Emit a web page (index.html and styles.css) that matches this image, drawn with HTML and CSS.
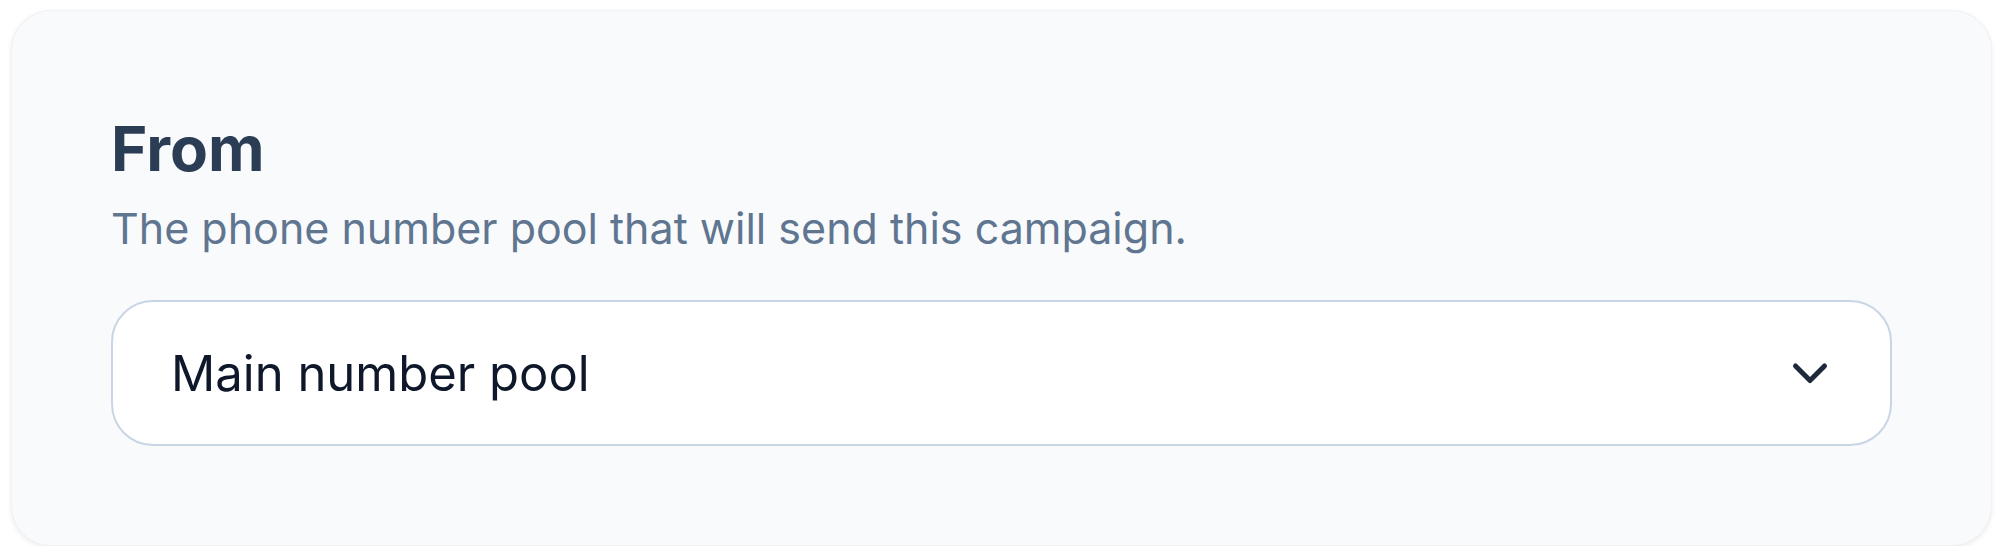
FILE: index.html
```html
<!DOCTYPE html>
<html lang="en">
<head>
    <meta charset="UTF-8">
    <meta name="viewport" content="width=device-width, initial-scale=1.0">
    <title>Campaign sender</title>
    <link rel="stylesheet" href="styles.css">
</head>
<body>
    <div class="card">
        <h2 class="card_title">From</h2>
        <p class="card_hint">The phone number pool that will send this campaign.</p>
        <div class="select_box">
            <span class="select_value">Main number pool</span>
            <svg class="select_chevron" width="40" height="24" viewBox="0 0 40 24" fill="none">
                <path d="M5.5 5 L20 19.5 L34.5 5" stroke="#1e2a3b" stroke-width="5" stroke-linecap="round" stroke-linejoin="round"/>
            </svg>
        </div>
    </div>
</body>
</html>
```

FILE: styles.css
```css
* {
    margin: 0;
    padding: 0;
    box-sizing: border-box;
}

body {
    background: #ffffff;
    font-family: Inter, "Noto Sans", sans-serif;
}

.card {
    margin: 10px 8px 0 11px;
    height: 536px;
    padding: 101px 99px 0 99px;
    border: 1px solid #f0f1f4;
    border-radius: 40px;
    background-color: #f8fafc;
    box-shadow: 0 2px 5px rgba(15, 23, 42, 0.08);
}

.card_title {
    font-size: 62px;
    line-height: 74px;
    font-weight: 700;
    color: #2b3d55;
}

.card_hint {
    margin-top: 16px;
    font-size: 43px;
    line-height: 52px;
    color: #5f7590;
}

.select_box {
    margin-top: 46px;
    height: 146px;
    padding: 0 60px 0 58px;
    display: flex;
    align-items: center;
    justify-content: space-between;
    border: 2px solid #c9d5e4;
    border-radius: 42px;
    background-color: #ffffff;
}

.select_value {
    font-size: 49px;
    color: #0f172a;
}

.select_chevron {
    display: block;
}
```
